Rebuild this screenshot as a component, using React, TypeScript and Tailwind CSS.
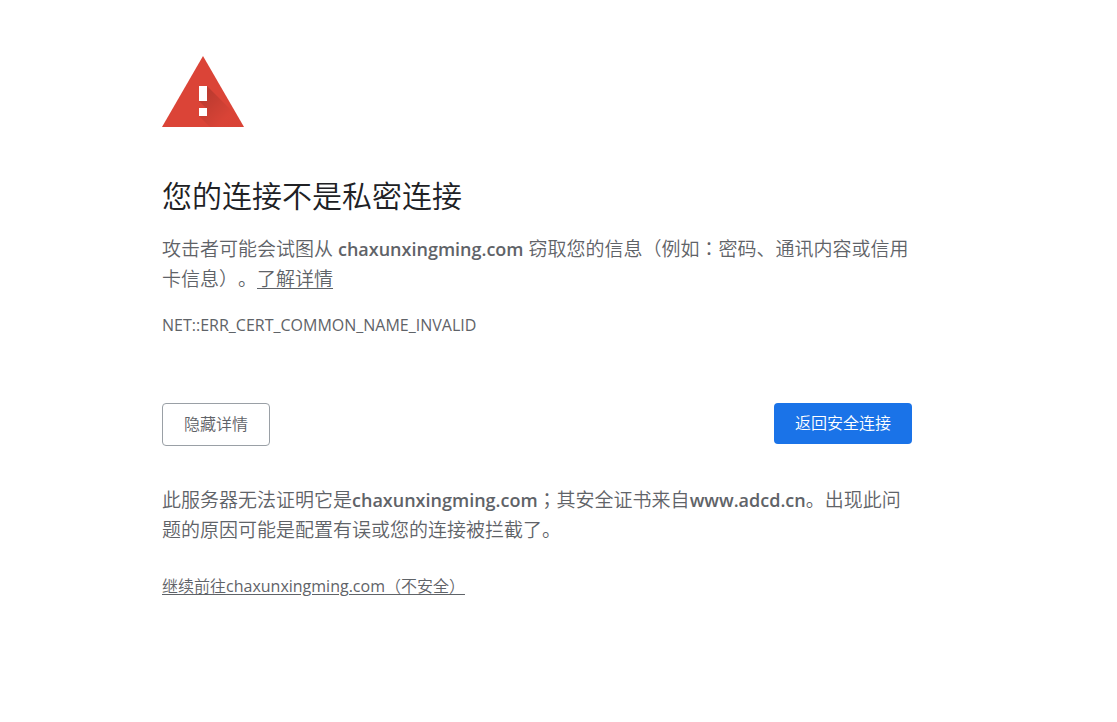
const linkClass = "text-[#5f6368] underline underline-offset-2";

function WarningIcon() {
  return (
    <svg
      width="82"
      height="71"
      viewBox="0 0 82 71"
      className="block"
      aria-hidden="true"
    >
      <defs>
        <linearGradient
          id="shade"
          gradientUnits="userSpaceOnUse"
          x1="40"
          y1="42"
          x2="62"
          y2="64"
        >
          <stop offset="0" stopColor="#000" stopOpacity="0.14" />
          <stop offset="1" stopColor="#000" stopOpacity="0.01" />
        </linearGradient>
      </defs>
      <path d="M41 0 82 71H0Z" fill="#db4437" />
      <path
        d="M45 30 76 61 82 71H48L37 60H45V53L37 45H45Z"
        fill="url(#shade)"
      />
      <path d="M37 30h8v15h-8zM37 52h8v8h-8z" fill="#fff" />
    </svg>
  );
}

// Colons and semicolons sit in the middle of their square.
function Mark({ children }: { children: string }) {
  return <span className="font-['Noto_Sans_CJK_JP',sans-serif]">{children}</span>;
}

function Host({ children }: { children: string }) {
  return <strong className="text-lg leading-none font-semibold">{children}</strong>;
}

export default function App() {
  return (
    <div className="pr-[43px]">
      <main className="mx-auto w-full max-w-[750px] pt-14 pb-10 font-['Open_Sans','Noto_Sans_CJK_SC',sans-serif] text-[19px] leading-[30px] font-[350] text-[#5f6368] [text-spacing-trim:space-all]">
        <WarningIcon />

        <h1 className="mt-12 text-3xl leading-[42px] text-[#202124]">
          您的连接不是私密连接
        </h1>

        <p className="-mr-2 mt-4">
          攻击者可能会试图从 <Host>chaxunxingming.com</Host>{" "}
          窃取您的信息（例如<Mark>：</Mark>密码、通讯内容或信用卡信息）。
          <a href="#learn-more" className={linkClass}>
            了解详情
          </a>
        </p>

        <p className="mt-4 text-base leading-[30px] font-normal">
          NET::ERR_CERT_COMMON_NAME_INVALID
        </p>

        <div className="mt-[63px] flex items-start justify-between">
          <button
            type="button"
            className="rounded border border-[#9aa0a6] px-[21px] py-2 text-base leading-[25px]"
          >
            隐藏详情
          </button>
          <button
            type="button"
            className="rounded bg-[#1a73e8] px-[21px] py-2 text-base leading-[25px] text-white"
          >
            返回安全连接
          </button>
        </div>

        <p className="mt-[38px]">
          此服务器无法证明它是<Host>chaxunxingming.com</Host>
          <Mark>；</Mark>其安全证书来自<Host>www.adcd.cn</Host>
          。出现此问题的原因可能是配置有误或您的连接被拦截了。
        </p>

        <p className="mt-[26px] text-base leading-[30px]">
          <a href="#proceed" className={linkClass}>
            继续前往<span className="font-normal">chaxunxingming.com</span>
            （不安全）
          </a>
        </p>
      </main>
    </div>
  );
}
